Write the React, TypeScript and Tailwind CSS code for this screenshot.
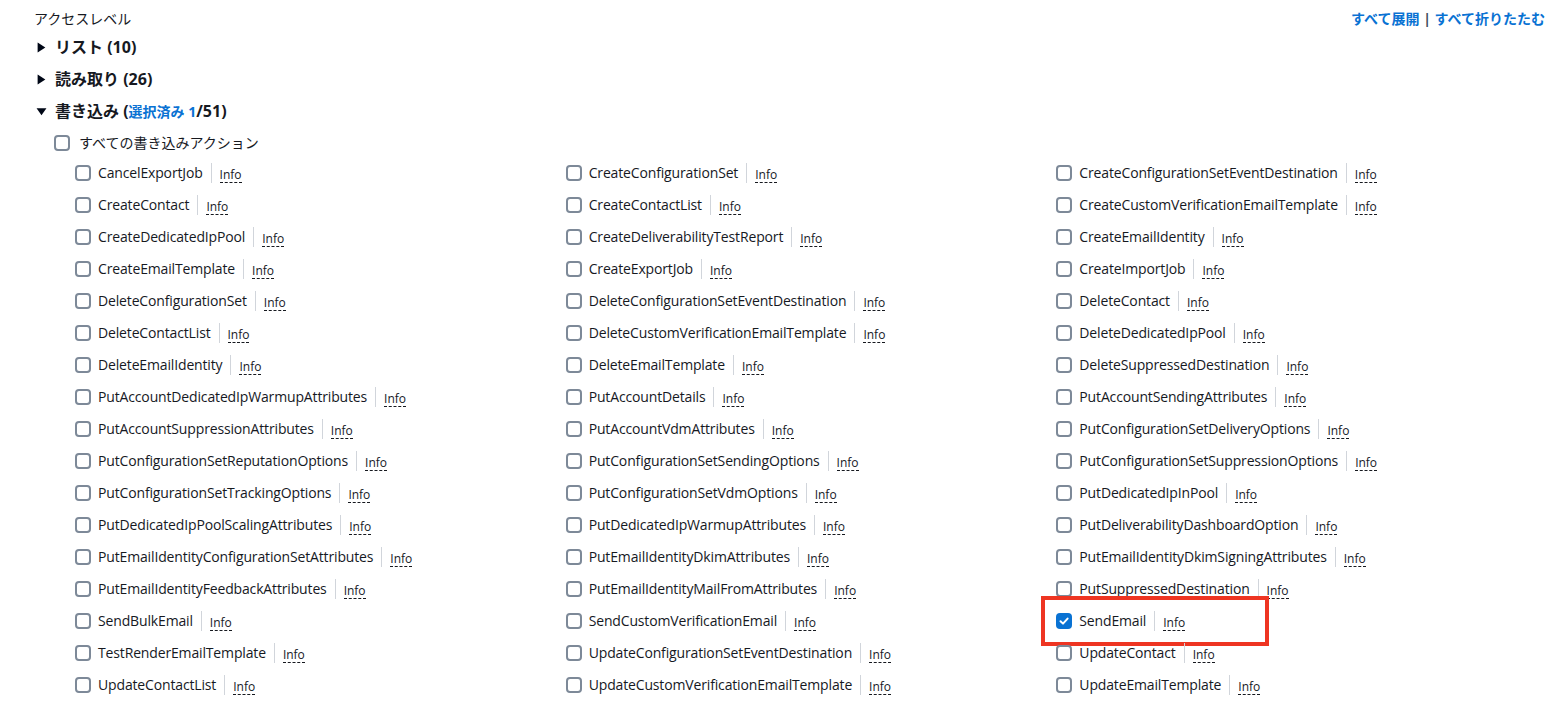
import { Fragment } from "react"

const actions = [
  "CancelExportJob", "CreateConfigurationSet", "CreateConfigurationSetEventDestination",
  "CreateContact", "CreateContactList", "CreateCustomVerificationEmailTemplate",
  "CreateDedicatedIpPool", "CreateDeliverabilityTestReport", "CreateEmailIdentity",
  "CreateEmailTemplate", "CreateExportJob", "CreateImportJob",
  "DeleteConfigurationSet", "DeleteConfigurationSetEventDestination", "DeleteContact",
  "DeleteContactList", "DeleteCustomVerificationEmailTemplate", "DeleteDedicatedIpPool",
  "DeleteEmailIdentity", "DeleteEmailTemplate", "DeleteSuppressedDestination",
  "PutAccountDedicatedIpWarmupAttributes", "PutAccountDetails", "PutAccountSendingAttributes",
  "PutAccountSuppressionAttributes", "PutAccountVdmAttributes", "PutConfigurationSetDeliveryOptions",
  "PutConfigurationSetReputationOptions", "PutConfigurationSetSendingOptions", "PutConfigurationSetSuppressionOptions",
  "PutConfigurationSetTrackingOptions", "PutConfigurationSetVdmOptions", "PutDedicatedIpInPool",
  "PutDedicatedIpPoolScalingAttributes", "PutDedicatedIpWarmupAttributes", "PutDeliverabilityDashboardOption",
  "PutEmailIdentityConfigurationSetAttributes", "PutEmailIdentityDkimAttributes", "PutEmailIdentityDkimSigningAttributes",
  "PutEmailIdentityFeedbackAttributes", "PutEmailIdentityMailFromAttributes", "PutSuppressedDestination",
  "SendBulkEmail", "SendCustomVerificationEmail", "SendEmail",
  "TestRenderEmailTemplate", "UpdateConfigurationSetEventDestination", "UpdateContact",
  "UpdateContactList", "UpdateCustomVerificationEmailTemplate", "UpdateEmailTemplate",
]

const Checkbox = ({ checked = false }: { checked?: boolean }) =>
  checked ? (
    <span className="flex h-4 w-4 shrink-0 items-center justify-center rounded-[4px] bg-[#0972d3]">
      <svg width="12" height="12" viewBox="0 0 12 12" fill="none">
        <path d="M2.5 6.2 5 8.6 9.6 3.6" stroke="white" strokeWidth="2" strokeLinecap="round" strokeLinejoin="round" />
      </svg>
    </span>
  ) : (
    <span className="h-4 w-4 shrink-0 rounded-[4px] border-2 border-[#7d8998] bg-white" />
  )

const Caret = ({ open = false }: { open?: boolean }) => (
  <svg width="11" height="11" viewBox="0 0 10 10" className="shrink-0">
    {open ? <path d="M0.5 2 9.5 2 5 8.5Z" fill="#000716" /> : <path d="M1.5 0.5 8.5 5 1.5 9.5Z" fill="#000716" />}
  </svg>
)

const Action = ({ name }: { name: string }) => {
  const checked = name === "SendEmail"
  return (
    <div className="relative flex h-8 items-center">
      {checked && (
        <div className="pointer-events-none absolute left-[-15px] top-[-9px] h-[50px] w-[228px] border-4 border-[#ee3522]" />
      )}
      <Checkbox checked={checked} />
      <span className="ml-[7px] text-[14px] leading-5 tracking-[-0.15px] text-[#16191f]">{name}</span>
      <span className="mx-[8px] h-5 w-px bg-[#d1d5db]" />
      <span className="mt-[3px] border-b border-dashed border-[#16191f] text-[12px] font-normal leading-[15px] text-[#16191f]">
        Info
      </span>
    </div>
  )
}

export default function App() {
  return (
    <div
      className="min-h-[716px] bg-white pt-[9px] text-[#16191f]"
      style={{ fontFamily: '"Open Sans", "Noto Sans CJK JP", sans-serif' }}
    >
      <div className="flex items-center justify-between pl-[34px] pr-[15px]">
        <span className="text-[14px] leading-5">アクセスレベル</span>
        <span className="text-[14px] font-bold leading-5 text-[#0972d3]">
          すべて展開 <span className="text-[#414d5c]">|</span> すべて折りたたむ
        </span>
      </div>

      <div className="mt-[2px] pl-[36px]">
        <div className="flex h-8 items-center gap-2">
          <Caret />
          <span className="text-[16px] font-bold">リスト (10)</span>
        </div>
        <div className="flex h-8 items-center gap-2">
          <Caret />
          <span className="text-[16px] font-bold">読み取り (26)</span>
        </div>
        <div className="flex h-8 items-center gap-2">
          <Caret open />
          <span className="text-[16px] font-bold">
            書き込み (<span className="text-[14px] text-[#0972d3]">選択済み 1</span>/51)
          </span>
        </div>
      </div>

      <div className="mt-px flex h-[29px] items-center pl-[54px]">
        <Checkbox />
        <span className="ml-[9px] text-[14px] leading-5">すべての書き込みアクション</span>
      </div>

      <div className="grid grid-cols-3 pl-[75px] pr-[13px]">
        {actions.map((a) => (
          <Fragment key={a}>
            <Action name={a} />
          </Fragment>
        ))}
      </div>
    </div>
  )
}
